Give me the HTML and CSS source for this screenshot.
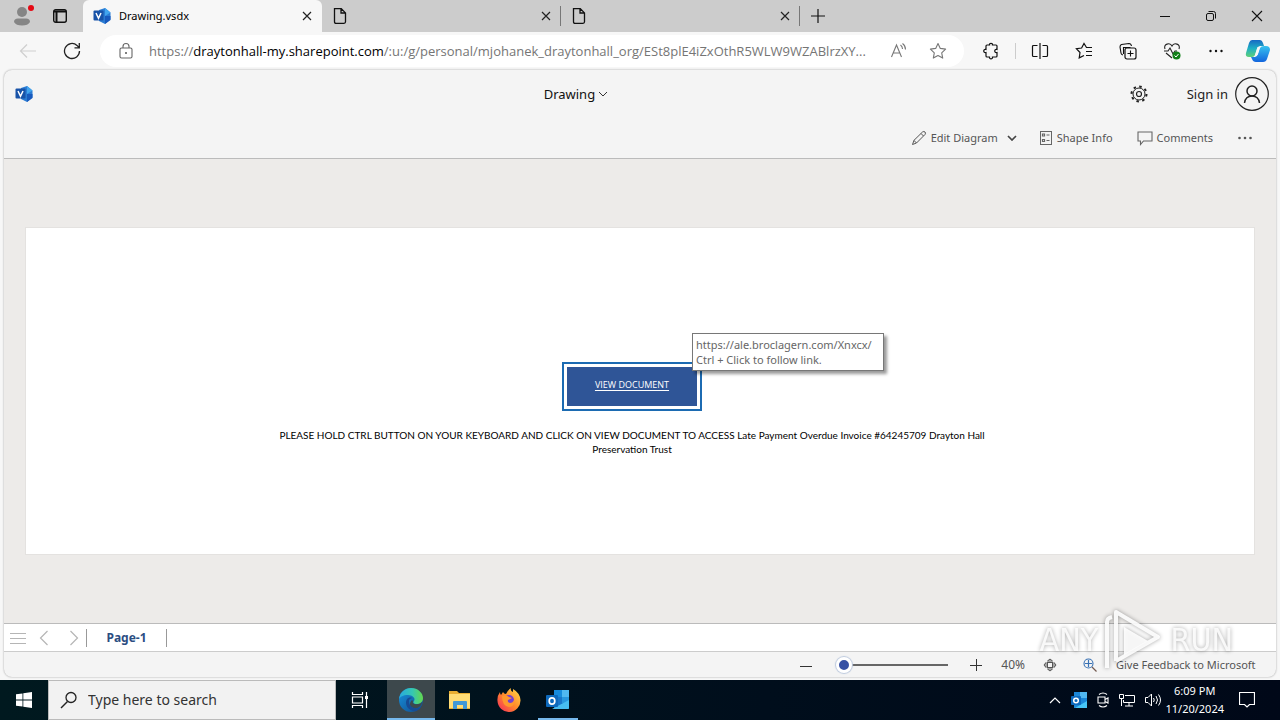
FILE: index.html
```html
<!DOCTYPE html>
<html lang="en">
<head>
<meta charset="utf-8">
<title>Drawing.vsdx</title>
<link rel="stylesheet" href="styles.css">
</head>
<body>
<svg class="defs" aria-hidden="true">
  <defs>
    <linearGradient id="edgeA" x1="0" y1="0" x2="1" y2="0"><stop offset="0" stop-color="#28a9e0"/><stop offset=".55" stop-color="#35c7b4"/><stop offset="1" stop-color="#64d84c"/></linearGradient>
    <linearGradient id="edgeB" x1="0" y1="0" x2="1" y2="1"><stop offset="0" stop-color="#1793df"/><stop offset="1" stop-color="#114a8b"/></linearGradient>
    <linearGradient id="copA" x1="0" y1="0" x2="0" y2="1"><stop offset="0" stop-color="#1769c4"/><stop offset=".5" stop-color="#1fb0c4"/><stop offset="1" stop-color="#5fd078"/></linearGradient>
    <linearGradient id="copB" x1="0" y1="0" x2="0" y2="1"><stop offset="0" stop-color="#37c2ef"/><stop offset="1" stop-color="#1265dd"/></linearGradient>
    <linearGradient id="fox" x1="1" y1="0" x2="0" y2="1"><stop offset="0" stop-color="#ffe04a"/><stop offset=".5" stop-color="#ff8a2b"/><stop offset="1" stop-color="#f5245f"/></linearGradient>
    <symbol id="visio" viewBox="0 0 18 18">
      <path d="M6 3l6-2 5.500 4.500v7L12 17l-6-3z" fill="#2b7cd3"/><path d="M12 1l5.500 4.500L12 9z" fill="#41a5ee"/><path d="M17.500 9v4L12 17V9z" fill="#185abd"/>
      <rect x="0.500" y="3.500" width="10" height="10" rx="1" fill="#1853a8"/><path d="M3 6l2.500 5.200L8 6" fill="none" stroke="#fff" stroke-width="1.500"/>
    </symbol>
    <symbol id="sheet" viewBox="0 0 16 18"><path d="M2.500 1.700h6.800l4.200 4.200v8.900q0 1.500-1.500 1.500H4q-1.500 0-1.500-1.500zM9 1.700V6h4.500" fill="none" stroke="#111" stroke-width="1.300"/></symbol>
    <symbol id="close" viewBox="0 0 10 10"><path d="M1 1l8 8M9 1L1 9" stroke="#222" stroke-width="1.200"/></symbol>
    <symbol id="star" viewBox="0 0 18 18"><path d="M9 1.500l2.300 4.900 5.300.7-3.900 3.700 1 5.300L9 13.500l-4.700 2.600 1-5.300L1.400 7.100l5.300-.7z" fill="none" stroke="#777" stroke-width="1.100" stroke-linejoin="round"/></symbol>
    <symbol id="outlook" viewBox="0 0 24 22">
      <path d="M8 1h14q1 0 1 1v17q0 1-1 1H8z" fill="#1976c9"/><path d="M8 1h8v7H8z" fill="#168bdd"/><path d="M16 1h7v7h-7z" fill="#50b8f1"/><path d="M16 8h7v6h-7z" fill="#2897df"/><path d="M6 20l17-9v8q0 1-1 1z" fill="#47bdf1"/>
      <rect y="6" width="12" height="12" rx="1" fill="#0d69bc"/><ellipse cx="6" cy="12" rx="2.800" ry="3.200" fill="none" stroke="#fff" stroke-width="1.700"/>
    </symbol>
    <symbol id="outlook-tray" viewBox="0 0 16 16">
      <path d="M3 0h13v16H3z" fill="#1b86d6"/><path d="M9 0h7v6H9z" fill="#50b8f1"/><path d="M4 16l12-7v7z" fill="#47c5f5"/>
      <rect y="4" width="10" height="9" rx="1" fill="#0d69bc"/><circle cx="5" cy="8.500" r="2.300" fill="none" stroke="#fff" stroke-width="1.500"/>
    </symbol>
  </defs>
</svg>

<header class="tabstrip">
  <div class="window-tools">
    <button class="icon-btn profile" aria-label="Profile">
      <svg width="18" height="20" viewBox="0 0 18 20"><circle cx="9" cy="6" r="5" fill="#858585"/><path d="M1 16q0-3.500 4-3.500h8q4 0 4 3.500-2 3.500-8 3.500t-8-3.500z" fill="#858585"/></svg>
      <span class="badge"></span>
    </button>
    <button class="icon-btn" aria-label="Tab actions"><svg width="16" height="16" viewBox="0 0 16 16"><rect x="1.700" y="1.700" width="12.600" height="12.600" rx="2" fill="none" stroke="#111" stroke-width="1.400"/><path d="M2 3.500h12M4.500 4v10" stroke="#111" stroke-width="2"/></svg></button>
  </div>
  <div class="tab active"><svg width="18" height="18"><use href="#visio"/></svg><span class="tab-title">Drawing.vsdx</span><button class="icon-btn" aria-label="Close tab"><svg width="10" height="10"><use href="#close"/></svg></button></div>
  <div class="tab"><svg width="16" height="18"><use href="#sheet"/></svg><span class="tab-title"></span><button class="icon-btn" aria-label="Close tab"><svg width="10" height="10"><use href="#close"/></svg></button></div>
  <div class="tab"><svg width="16" height="18"><use href="#sheet"/></svg><span class="tab-title"></span><button class="icon-btn" aria-label="Close tab"><svg width="10" height="10"><use href="#close"/></svg></button></div>
  <button class="icon-btn new-tab" aria-label="New tab"><svg width="14" height="14" viewBox="0 0 14 14"><path d="M7 0v14M0 7h14" stroke="#111" stroke-width="1.200"/></svg></button>
  <div class="window-controls">
    <button class="icon-btn" aria-label="Minimize"><svg width="12" height="12" viewBox="0 0 12 12"><path d="M1 6.500h10" stroke="#111"/></svg></button>
    <button class="icon-btn" aria-label="Restore"><svg width="12" height="12" viewBox="0 0 12 12"><rect x="1.500" y="3.500" width="7" height="7" rx="1.500" fill="none" stroke="#111"/><path d="M3.500 1.500h5q2 0 2 2v5" fill="none" stroke="#111"/></svg></button>
    <button class="icon-btn" aria-label="Close"><svg width="12" height="12" viewBox="0 0 12 12"><path d="M1 1l10 10M11 1L1 11" stroke="#111" stroke-width="1.100"/></svg></button>
  </div>
</header>

<nav class="toolbar">
  <button class="icon-btn back" aria-label="Back"><svg width="18" height="16" viewBox="0 0 18 16"><path d="M17 8H1.500M8 1.500L1.500 8 8 14.500" fill="none" stroke="#cfcfcf" stroke-width="1.200"/></svg></button>
  <button class="icon-btn reload" aria-label="Refresh"><svg width="18" height="18" viewBox="0 0 18 18"><path d="M16.500 9A7.500 7.500 0 1 1 14 3.400L16 5.500M16.300 1v4.800h-4.800" fill="none" stroke="#222" stroke-width="1.300"/></svg></button>
  <div class="address">
    <svg width="14" height="18" viewBox="0 0 14 18"><rect x="1" y="6" width="12" height="10" rx="1.500" fill="none" stroke="#666" stroke-width="1.100"/><path d="M4 6V4.500a3 3 0 0 1 6 0V6" fill="none" stroke="#666" stroke-width="1.100"/><circle cx="7" cy="11" r="1" fill="#555"/></svg>
    <span class="url">https://<b>draytonhall-my.sharepoint.com</b>/:u:/g/personal/mjohanek_draytonhall_org/ESt8plE4iZxOthR5WLW9WZABlrzXY...</span>
    <button class="icon-btn" aria-label="Read aloud"><svg width="18" height="18" viewBox="0 0 18 18"><path d="M1.500 15L6.500 3l5 12M3.200 11h6.600M10.500 3q2 1.500 2 4M12.500 1.500q3 2 3 6" fill="none" stroke="#777" stroke-width="1.100"/></svg></button>
    <button class="icon-btn favorite" aria-label="Favorite"><svg width="18" height="18"><use href="#star"/></svg></button>
  </div>
  <div class="browser-actions">
    <button class="icon-btn" aria-label="Extensions"><svg width="18" height="18" viewBox="0 0 18 18"><path d="M5 3h2.500C7 .8 11 .8 10.500 3H14q1 0 1 1v3.500c-3-.8-3 3.800 0 3V14q0 1-1 1h-3.500c.5 2.500-3.500 2.500-3 0H5q-1 0-1-1v-3.500C1 11.300 1 6.700 4 7.500V4q0-1 1-1z" fill="none" stroke="#111" stroke-width="1.200"/></svg></button>
    <span class="divider"></span>
    <button class="icon-btn" aria-label="Split screen"><svg width="18" height="18" viewBox="0 0 18 18"><path d="M6.500 3.500h-4q-1 0-1 1v9q0 1 1 1h4M11.500 3.500h4q1 0 1 1v9q0 1-1 1h-4M9 1v16" fill="none" stroke="#111" stroke-width="1.200"/></svg></button>
    <button class="icon-btn" aria-label="Favorites"><svg width="18" height="18" viewBox="0 0 18 18"><path d="M17 5.500h-5.500L9 1.500 6.600 6l-5.200.7L5 10.500l-.8 5.400L9 13.500M11 9.500h6M11 13.500h6" fill="none" stroke="#111" stroke-width="1.200"/></svg></button>
    <button class="icon-btn" aria-label="Collections"><svg width="18" height="18" viewBox="0 0 18 18"><rect x="6" y="6" width="11" height="11" rx="2" fill="none" stroke="#111" stroke-width="1.200"/><path d="M4 13Q2 12.500 2 11L1 5q0-2 1.500-2.500L10 1.500q2 0 2.500 2.500M11.500 8.500v6M8.500 11.500h6M4.500 12V5.500h7" fill="none" stroke="#111" stroke-width="1.100"/></svg></button>
    <button class="icon-btn" aria-label="Browser essentials"><svg width="18" height="18" viewBox="0 0 18 18"><path d="M2 7c-2-5 5-7 7-3 2-4 9-2 7 3M1 9h4l2-3 3 6 2-3h2M3 11l6 5" fill="none" stroke="#222" stroke-width="1.100"/><circle cx="13.500" cy="13.500" r="4" fill="#118018"/><path d="M11.500 13.500l1.500 1.500 2.500-3" fill="none" stroke="#fff"/></svg></button>
    <button class="icon-btn" aria-label="More"><svg width="18" height="18" viewBox="0 0 18 18"><g fill="#111"><circle cx="3.500" cy="9" r="1.200"/><circle cx="9" cy="9" r="1.200"/><circle cx="14.500" cy="9" r="1.200"/></g></svg></button>
    <button class="icon-btn copilot" aria-label="Copilot"><svg width="26" height="26" viewBox="0 0 26 26"><path d="M7 2h8q2 0 3 3l1 3h-4q-2 0-3 3l-2 6q-1 2-3 2H4q-4 0-3-4L4 5q1-3 3-3z" fill="url(#copA)"/><path d="M19 8h2q4 0 4 4l-3 9q-1 3-4 3h-7q-3 0-4-3l-1-2h4q2 0 3-3l2-6q1-2 4-2z" fill="url(#copB)"/><path d="M12.500 9H15l-2.500 8H10z" fill="#f7f7f7"/></svg></button>
  </div>
</nav>

<main class="app">
  <header class="app-header">
    <div class="app-logo"><svg width="18" height="18"><use href="#visio"/></svg></div>
    <button class="file-name">Drawing <svg width="10" height="6" viewBox="0 0 10 6"><path d="M1 1l4 4 4-4" fill="none" stroke="#333"/></svg></button>
    <div class="account">
      <button class="icon-btn settings" aria-label="Settings"><svg width="18" height="18" viewBox="0 0 18 18"><circle cx="9" cy="9" r="6" fill="none" stroke="#222" stroke-width="1"/><circle cx="9" cy="9" r="7.500" fill="none" stroke="#222" stroke-width="2" stroke-dasharray="2.500 3.390"/><circle cx="9" cy="9" r="2.500" fill="none" stroke="#222" stroke-width="1.200"/></svg></button>
      <button class="sign-in">Sign in <svg width="34" height="34" viewBox="0 0 34 34"><circle cx="17" cy="17" r="16.300" fill="none" stroke="#222" stroke-width="1.200"/><circle cx="17" cy="14" r="5" fill="none" stroke="#222" stroke-width="1.500"/><path d="M9.500 26q1-7 7.500-7t7.500 7" fill="none" stroke="#222" stroke-width="1.500"/></svg></button>
    </div>
  </header>
  <div class="commands">
    <button class="command edit"><svg width="16" height="16" viewBox="0 0 16 16"><path d="M1.500 14.500L3 10.300 11.500 2q1.500-1 2.500 0t0 2.500L5.500 13zM3 10.500L5.500 13M10 3.500L12.500 6" fill="none" stroke="#555"/></svg>Edit Diagram<svg class="chevron" width="10" height="6" viewBox="0 0 10 6"><path d="M1 1l4 4 4-4" fill="none" stroke="#444" stroke-width="1.700"/></svg></button>
    <button class="command shape"><svg width="14" height="16" viewBox="0 0 14 16"><rect x="1.500" y="1.500" width="11" height="13" fill="none" stroke="#666"/><path d="M3.500 4h2v2h-2zM3.500 9.500h2v2h-2zM7.500 5h3M7.500 10.500h3" fill="none" stroke="#666" stroke-width="1.200"/></svg>Shape Info</button>
    <button class="command comments"><svg width="16" height="16" viewBox="0 0 16 16"><path d="M1 2h14v9H6.500L3.500 14.500V11H1z" fill="none" stroke="#666" stroke-width="1.100"/></svg>Comments</button>
    <button class="icon-btn" aria-label="More commands"><svg width="16" height="16" viewBox="0 0 16 16"><g fill="#555"><circle cx="2.500" cy="8" r="1.300"/><circle cx="8" cy="8" r="1.300"/><circle cx="13.500" cy="8" r="1.300"/></g></svg></button>
  </div>
  <section class="canvas">
    <article class="page">
      <div class="link-box">
        <a class="view-link" href="#">VIEW DOCUMENT</a>
        <div class="tooltip" role="tooltip">https://ale.broclagern.com/Xnxcx/<br>Ctrl + Click to follow link.</div>
      </div>
      <p class="note">PLEASE HOLD CTRL BUTTON ON YOUR KEYBOARD AND CLICK ON VIEW DOCUMENT TO ACCESS Late Payment Overdue Invoice #64245709 Drayton Hall Preservation Trust</p>
    </article>
  </section>
  <div class="page-tabs">
    <button class="icon-btn" aria-label="All pages"><svg width="16" height="14" viewBox="0 0 16 14"><path d="M0 2.500h16M0 7.500h16M0 12.500h16" stroke="#b5b5b5"/></svg></button>
    <button class="icon-btn" aria-label="Previous page"><svg width="10" height="16" viewBox="0 0 10 16"><path d="M8.500 1L1.500 8l7 7" fill="none" stroke="#b5b5b5" stroke-width="1.200"/></svg></button>
    <button class="icon-btn" aria-label="Next page"><svg width="10" height="16" viewBox="0 0 10 16"><path d="M1.500 1l7 7-7 7" fill="none" stroke="#b5b5b5" stroke-width="1.200"/></svg></button>
    <button class="page-tab">Page-1</button>
  </div>
  <footer class="status">
    <button class="icon-btn" aria-label="Zoom out"><svg width="12" height="12" viewBox="0 0 12 12"><path d="M0 7.500h12" stroke="#333"/></svg></button>
    <input class="zoom" type="range" min="0" max="100" value="0" aria-label="Zoom">
    <button class="icon-btn" aria-label="Zoom in"><svg width="12" height="12" viewBox="0 0 12 12"><path d="M0 6.500h12M6.500 0v12" stroke="#333"/></svg></button>
    <span class="percent">40%</span>
    <button class="icon-btn" aria-label="Fit to window"><svg width="14" height="14" viewBox="0 0 14 14"><rect x="4.500" y="4.500" width="5" height="5" fill="none" stroke="#555"/><path d="M4.500 3L7 1l2.500 2zM4.500 11L7 13l2.500-2zM3 4.500L1 7l2 2.500zM11 4.500L13 7l-2 2.500z" fill="none" stroke="#555"/></svg></button>
    <button class="icon-btn zoom-selection" aria-label="Zoom to selection"><svg width="14" height="14" viewBox="0 0 14 14"><circle cx="5.500" cy="5.500" r="4.500" fill="none" stroke="#3871b4" stroke-width="1.100"/><path d="M5.500 2v7M2 5.500h7" stroke="#3871b4" stroke-width="1.200"/><path d="M9 9l4.500 4.500" stroke="#745b50" stroke-width="1.300"/></svg></button>
    <button class="feedback">Give Feedback to Microsoft</button>
  </footer>
</main>

<div class="watermark" aria-hidden="true">
  <span>ANY</span>
  <svg width="60" height="64" viewBox="0 0 60 64"><path d="M3 60V14q0-4 5-5M12 53V4l42 25-42 24" fill="none" stroke="#fff" stroke-opacity=".9" stroke-width="4" stroke-linejoin="round"/><path d="M20 19v28l24-14z" fill="#fff" fill-opacity=".9"/></svg>
  <span>RUN</span>
</div>

<footer class="taskbar">
  <button class="task start" aria-label="Start"><svg width="16" height="16" viewBox="0 0 16 16"><path d="M0 2.300L6.500 1.400v6.200H0zM7.300 1.200L16 0v7.600H7.300zM0 8.400h6.500v6.200L0 13.700zM7.300 8.400H16V16l-8.700-1.200z" fill="#fff"/></svg></button>
  <label class="search"><svg width="18" height="18" viewBox="0 0 18 18"><circle cx="11" cy="6.500" r="5" fill="none" stroke="#222" stroke-width="1.300"/><path d="M7.500 10.500L1 17" stroke="#222" stroke-width="1.400"/></svg><input type="text" placeholder="Type here to search" aria-label="Type here to search"></label>
  <button class="task task-view" aria-label="Task view"><svg width="18" height="18" viewBox="0 0 18 18"><path d="M1.500 1v2.500h10V1M1.500 17v-2.500h10V17M1.500 6h10v6h-10zM15.500 1v16" fill="none" stroke="#fff" stroke-width="1.200"/><path d="M14 5h3v3h-3z" fill="#fff"/></svg></button>
  <button class="task open current" aria-label="Edge"><svg width="26" height="26" viewBox="0 0 26 26"><circle cx="13" cy="13" r="12" fill="url(#edgeB)"/><path d="M1 12C2 5 7 1 13 1c7 0 12 5 12 10 0 4-3 6-6 6-4 0-4-2-3-3 2-3-2-6-6-6-5 0-8 2-9 4z" fill="url(#edgeA)"/><path d="M15 14c-1 2 1 4 5 3 2 0 3-1 4-2 0 2-2 5-5 6-7 1-9-4-5-8z" fill="#3d484c"/><path d="M9 12c-3 5 1 12 8 12 2 0 5-2 6-4-5 3-12 0-12-5 0-2 0-3 3-4-2-1-4 0-5 1z" fill="#174b94"/></svg></button>
  <button class="task" aria-label="File Explorer"><svg width="22" height="20" viewBox="0 0 22 20"><path d="M0 1h8l2 2h11v16H0z" fill="#e9ae32"/><path d="M0 4h21v14H0z" fill="#ffdc75"/><path d="M4 19v-7q0-1 1-1h12q1 0 1 1v7h-4v-4H8v4z" fill="#4098d7"/></svg></button>
  <button class="task" aria-label="Firefox"><svg width="24" height="24" viewBox="0 0 24 24"><path d="M3 4q0 2 1 3L6 4q1 2 3 2 1-3 5-6-1 3 2 4V1q7 4 7.500 11a11.500 11.500 0 0 1-23 1Q0 8 3 4z" fill="url(#fox)"/><circle cx="12" cy="12" r="5" fill="#7541d1"/><path d="M5 8q4-2 7 1l3 1-4 2q-1 2 2 3 3 0 4-3 1 7-5 7-7-1-7-11z" fill="#ff982d"/></svg></button>
  <button class="task open background" aria-label="Outlook"><svg width="24" height="22"><use href="#outlook"/></svg></button>
  <div class="tray">
    <button class="icon-btn" aria-label="Hidden icons"><svg width="12" height="8" viewBox="0 0 12 8"><path d="M1 7l5-5 5 5" fill="none" stroke="#fff" stroke-width="1.200"/></svg></button>
    <button class="icon-btn" aria-label="Outlook"><svg width="16" height="16"><use href="#outlook-tray"/></svg></button>
    <button class="icon-btn" aria-label="Meet now"><svg width="12" height="16" viewBox="0 0 12 16"><path d="M2 2.500q4-3 8 0M2 13.500q4 3 8 0M1 5h7v6H1zM8 7.500L11 6v5L8 9.500" fill="none" stroke="#fff" stroke-width="1.100"/></svg></button>
    <button class="icon-btn" aria-label="Network"><svg width="16" height="14" viewBox="0 0 16 14"><path d="M6 2.500h9.500v7h-11V7M10 9.500V13M6 13h8M.5 1.500h4v4h-4zM2.500 5.500V13" fill="none" stroke="#fff"/></svg></button>
    <button class="icon-btn" aria-label="Volume"><svg width="16" height="14" viewBox="0 0 16 14"><path d="M.5 4.500h2.500L6.500 1v12L3 9.500H.5zM8.500 5q1.500 2 0 4M11 3q3 4 0 8M13.500 1.500q4 5.500 0 11" fill="none" stroke="#fff"/></svg></button>
    <div class="clock"><span>6:09 PM</span><span>11/20/2024</span></div>
    <button class="icon-btn" aria-label="Notifications"><svg width="16" height="16" viewBox="0 0 16 16"><path d="M.5.5h15v12h-5L8 15l-2.500-2.500h-5z" fill="none" stroke="#fff" stroke-width="1.200"/></svg></button>
  </div>
</footer>
</body>
</html>
```
FILE: styles.css
```css
* { box-sizing: border-box; }
body { margin: 0; min-height: 100vh; display: flex; flex-direction: column; background: #f7f7f7; color: #222; font: 13px/16px "Noto Sans", sans-serif; }
button { border: 0; padding: 0; margin: 0; background: none; color: inherit; font: inherit; white-space: nowrap; }
svg { display: block; flex: none; }
.defs { position: absolute; width: 0; height: 0; }
.icon-btn { display: flex; align-items: center; justify-content: center; flex: none; }

.tabstrip { display: flex; height: 32px; background: #ccc; }
.window-tools { display: flex; align-items: center; gap: 21px; width: 83px; padding-left: 13px; }
.profile { position: relative; }
.badge { position: absolute; top: -1px; right: -3px; width: 6px; height: 6px; border-radius: 50%; background: #e50914; }
.tab { display: flex; align-items: center; flex: 0 1 239px; gap: 8px; padding: 0 10px; }
.tab:not(.active) { background: linear-gradient(#777, #777) right center / 1px 20px no-repeat; }
.tab.active { background: #f7f7f7; border-radius: 6px 6px 0 0; color: #000; font-size: 11px; }
.tab-title { flex: 1; }
.new-tab { width: 36px; }
.window-controls { display: flex; margin-left: auto; }
.window-controls .icon-btn { width: 46px; }

.toolbar { display: flex; align-items: center; height: 38px; padding-left: 19px; }
.back { width: 18px; margin-right: 26px; }
.reload { width: 18px; margin-right: 19px; }
.address { display: flex; align-items: center; flex: 1; min-width: 0; height: 32px; padding: 0 17px 0 19px; background: #fff; border-radius: 16px; }
.url { flex: 1; min-width: 0; margin: 0 0 0 16px; overflow: hidden; white-space: nowrap; font: 13px/20px "Open Sans", sans-serif; color: #757575; }
.url b { font-weight: 400; color: #000; }
.favorite { margin-left: 21px; }
.browser-actions { display: flex; align-items: center; gap: 26px; padding: 0 9px 0 18px; }
.browser-actions .divider { width: 1px; height: 16px; margin: 0 -11px; background: #ccc; }
.copilot { margin-left: -6px; }

.app { display: flex; flex-direction: column; flex: 1; margin: 0 4px 3px; background: #f4f4f4; border-radius: 8px; box-shadow: 0 0 2px #999; overflow: hidden; }
.app-header { display: grid; grid-template-columns: 4fr auto 5fr; align-items: center; height: 48px; padding: 0 7px 0 11px; }
.file-name { display: flex; align-items: center; gap: 3px; color: #111; }
.account { display: flex; justify-content: flex-end; align-items: center; }
.settings { margin-right: 39px; }
.sign-in { display: flex; align-items: center; gap: 7px; }
.commands { display: flex; align-items: center; justify-content: flex-end; height: 41px; padding: 0 23px 0 16px; border-bottom: 1px solid #bbb; color: #555; font-size: 11px; }
.command { display: flex; align-items: center; gap: 4px; }
.edit { margin-right: 22px; }
.shape { margin-right: 24px; }
.comments { margin-right: 24px; }
.chevron { margin-left: 5px; }

.canvas { flex: 1; display: flex; padding: 68px 21px; background: #edebe9; border-bottom: 1px solid #bbb; }
.page { flex: 1; display: flex; flex-direction: column; align-items: center; padding: 134px 16px 0 0; background: #fff; border: 1px solid #e4e2e0; }
.link-box { position: relative; padding: 3px; border: 2px solid #1c6bb2; }
.view-link { display: flex; justify-content: center; align-items: center; width: 130px; height: 39px; padding-bottom: 4px; background: #2f5597; color: #fff; font: 9px/12px "Open Sans", sans-serif; text-decoration: underline; text-underline-offset: 2px; }
.tooltip { position: absolute; left: 128px; top: -31px; min-width: 192px; padding: 3px; background: #fff; border: 1px solid #777; box-shadow: 3px 3px 3px #0006; color: #666; font-size: 11px; line-height: 15px; white-space: nowrap; }
.note { width: 740px; margin: 17px 0 0; color: #000; font: 10px/14px Lato, sans-serif; text-align: center; }

.page-tabs { display: flex; align-items: center; gap: 20px; height: 28px; padding-left: 6px; background: #fff; border-bottom: 1px solid #ccc; }
.page-tabs .icon-btn:nth-child(2) { margin-left: -7px; }
.page-tab { height: 18px; width: 81px; margin-left: -13px; border: solid #999; border-width: 0 1px; color: #2b4d82; font-size: 12px; font-weight: 700; line-height: 16px; }
.status { display: flex; align-items: center; justify-content: flex-end; height: 25px; padding-right: 16px; color: #555; font-size: 12px; }
.zoom { appearance: none; width: 112px; height: 16px; margin: 0 22px 0 24px; background: linear-gradient(#666, #666) center / 100% 2px no-repeat; }
.zoom::-webkit-slider-thumb { appearance: none; width: 16px; height: 16px; border: 3px solid #fff; border-radius: 50%; background: #3650a4; box-shadow: 0 0 1px 1px #bbc8dd; }
.percent { margin: 0 18px 0 19px; }
.zoom-selection { margin-left: 26px; }
.feedback { min-width: 144px; margin-left: 19px; font-size: 11px; text-align: left; }

.watermark { position: absolute; right: 47px; bottom: 48px; display: flex; align-items: center; gap: 6px; color: #ffffffd9; font: 32px/44px "DejaVu Sans Condensed", "Liberation Sans", sans-serif; filter: drop-shadow(0 0 2px #0006); pointer-events: none; }

.taskbar { display: flex; height: 40px; background: linear-gradient(90deg, #00191f, #000e1c 60%, #000818); color: #fff; }
.task { display: flex; align-items: center; justify-content: center; width: 48px; margin-right: 1px; }
.start { margin-right: 0; }
.task-view { margin-right: 3px; }
.open { background: linear-gradient(#76b9ed, #76b9ed) center bottom / 100% 2px no-repeat; }
.current { background-color: #3d484c; }
.background { background-size: 40px 2px; }
.search { display: flex; align-items: center; gap: 10px; width: 288px; padding: 0 11px; background: #f2f2f2; border: 1px solid #bbb; }
.search input { flex: 1; min-width: 0; border: 0; padding: 0; background: none; font: 14px/20px "Noto Sans", sans-serif; color: #333; }
.search input::placeholder { color: #333; opacity: 1; }
.tray { display: flex; align-items: center; gap: 10px; margin-left: auto; padding-right: 25px; }
.clock { display: flex; flex-direction: column; align-items: center; margin: 0 5px 0 -6px; font-size: 11px; line-height: 18px; }
```
